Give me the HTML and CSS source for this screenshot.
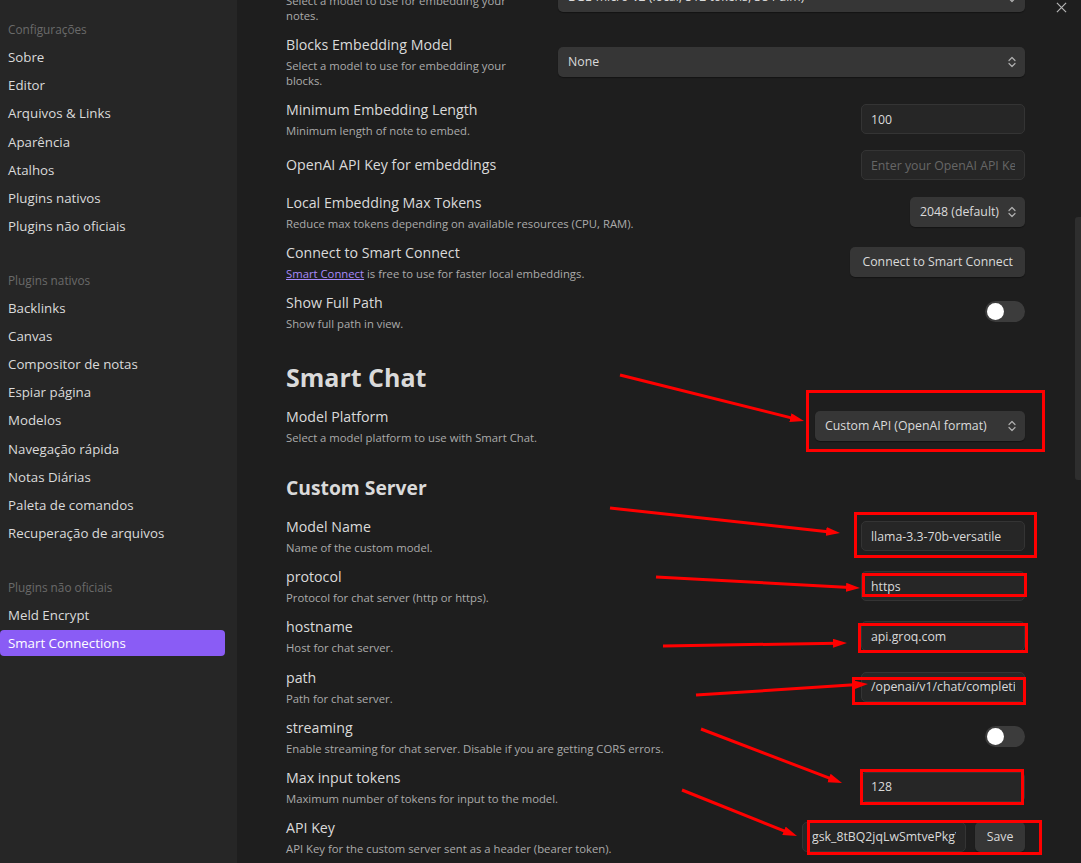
FILE: index.html
```html
<!DOCTYPE html>
<html lang="pt">
<head>
<meta charset="utf-8">
<title>Configurações</title>
<link rel="stylesheet" href="styles.css">
</head>
<body>
<div class="app">
  <nav class="sidebar">
    <div class="nav-group">
      <div class="nav-header">Configurações</div>
      <div class="nav-item">Sobre</div>
      <div class="nav-item">Editor</div>
      <div class="nav-item">Arquivos &amp; Links</div>
      <div class="nav-item">Aparência</div>
      <div class="nav-item">Atalhos</div>
      <div class="nav-item">Plugins nativos</div>
      <div class="nav-item">Plugins não oficiais</div>
    </div>
    <div class="nav-group">
      <div class="nav-header">Plugins nativos</div>
      <div class="nav-item">Backlinks</div>
      <div class="nav-item">Canvas</div>
      <div class="nav-item">Compositor de notas</div>
      <div class="nav-item">Espiar página</div>
      <div class="nav-item">Modelos</div>
      <div class="nav-item">Navegação rápida</div>
      <div class="nav-item">Notas Diárias</div>
      <div class="nav-item">Paleta de comandos</div>
      <div class="nav-item">Recuperação de arquivos</div>
    </div>
    <div class="nav-group">
      <div class="nav-header">Plugins não oficiais</div>
      <div class="nav-item">Meld Encrypt</div>
      <div class="nav-item active">Smart Connections</div>
    </div>
  </nav>

  <main class="content">
    <div class="settings">
      <div class="setting">
        <div class="info">
          <div class="name">Notes Embedding Model</div>
          <div class="desc">Select a model to use for embedding your notes.</div>
        </div>
        <div class="dropdown wide"><span>BGE-micro-v2 (local, 512 tokens, 384 dim)</span><svg class="chev" viewBox="0 0 8 12"><path d="M1 4.5 L4 1.5 L7 4.5 M1 7.5 L4 10.5 L7 7.5"/></svg></div>
      </div>

      <div class="setting">
        <div class="info">
          <div class="name">Blocks Embedding Model</div>
          <div class="desc">Select a model to use for embedding your blocks.</div>
        </div>
        <div class="dropdown wide"><span>None</span><svg class="chev" viewBox="0 0 8 12"><path d="M1 4.5 L4 1.5 L7 4.5 M1 7.5 L4 10.5 L7 7.5"/></svg></div>
      </div>

      <div class="setting">
        <div class="info">
          <div class="name">Minimum Embedding Length</div>
          <div class="desc">Minimum length of note to embed.</div>
        </div>
        <input class="text-input" type="text" value="100">
      </div>

      <div class="setting">
        <div class="info">
          <div class="name">OpenAI API Key for embeddings</div>
        </div>
        <input class="text-input" type="text" placeholder="Enter your OpenAI API Key">
      </div>

      <div class="setting">
        <div class="info">
          <div class="name">Local Embedding Max Tokens</div>
          <div class="desc">Reduce max tokens depending on available resources (CPU, RAM).</div>
        </div>
        <div class="dropdown tokens"><span>2048 (default)</span><svg class="chev" viewBox="0 0 8 12"><path d="M1 4.5 L4 1.5 L7 4.5 M1 7.5 L4 10.5 L7 7.5"/></svg></div>
      </div>

      <div class="setting">
        <div class="info">
          <div class="name">Connect to Smart Connect</div>
          <div class="desc"><a class="link" href="#">Smart Connect</a> is free to use for faster local embeddings.</div>
        </div>
        <button class="btn">Connect to Smart Connect</button>
      </div>

      <div class="setting">
        <div class="info">
          <div class="name">Show Full Path</div>
          <div class="desc">Show full path in view.</div>
        </div>
        <div class="toggle"><div class="knob"></div></div>
      </div>

      <h2 class="heading h-big">Smart Chat</h2>

      <div class="setting">
        <div class="info">
          <div class="name">Model Platform</div>
          <div class="desc">Select a model platform to use with Smart Chat.</div>
        </div>
        <div class="dropdown platform"><span>Custom API (OpenAI format)</span><svg class="chev" viewBox="0 0 8 12"><path d="M1 4.5 L4 1.5 L7 4.5 M1 7.5 L4 10.5 L7 7.5"/></svg></div>
      </div>

      <h3 class="heading h-small">Custom Server</h3>

      <div class="setting">
        <div class="info">
          <div class="name">Model Name</div>
          <div class="desc">Name of the custom model.</div>
        </div>
        <input class="text-input" type="text" value="llama-3.3-70b-versatile">
      </div>

      <div class="setting">
        <div class="info">
          <div class="name">protocol</div>
          <div class="desc">Protocol for chat server (http or https).</div>
        </div>
        <input class="text-input" type="text" value="https">
      </div>

      <div class="setting">
        <div class="info">
          <div class="name">hostname</div>
          <div class="desc">Host for chat server.</div>
        </div>
        <input class="text-input" type="text" value="api.groq.com">
      </div>

      <div class="setting">
        <div class="info">
          <div class="name">path</div>
          <div class="desc">Path for chat server.</div>
        </div>
        <input class="text-input" type="text" value="/openai/v1/chat/completions">
      </div>

      <div class="setting">
        <div class="info">
          <div class="name">streaming</div>
          <div class="desc">Enable streaming for chat server. Disable if you are getting CORS errors.</div>
        </div>
        <div class="toggle"><div class="knob"></div></div>
      </div>

      <div class="setting">
        <div class="info">
          <div class="name">Max input tokens</div>
          <div class="desc">Maximum number of tokens for input to the model.</div>
        </div>
        <input class="text-input" type="text" value="128">
      </div>

      <div class="setting">
        <div class="info">
          <div class="name">API Key</div>
          <div class="desc">API Key for the custom server sent as a header (bearer token).</div>
        </div>
        <div class="combo">
          <input class="text-input" type="text" value="gsk_8tBQ2jqLwSmtvePkgYxr3F">
          <button class="btn save">Save</button>
        </div>
      </div>
    </div>

    <svg class="close" viewBox="0 0 12 12"><path d="M1 1 L11 11 M11 1 L1 11"/></svg>
    <div class="scroll-thumb"></div>
  </main>
</div>

<svg class="annotations" width="1081" height="863" viewBox="0 0 1081 863">
  <defs>
    <marker id="ah" markerUnits="userSpaceOnUse" markerWidth="14" markerHeight="10" refX="4" refY="4.5" orient="auto">
      <path d="M0,0 L14,4.5 L0,9 z" fill="#ff0000"/>
    </marker>
  </defs>
  <g fill="none" stroke="#ff0000" stroke-width="3">
    <rect x="807.5" y="391.5" width="236" height="59"/>
    <rect x="855.5" y="513.5" width="180" height="43"/>
    <rect x="863.5" y="574.5" width="162" height="21"/>
    <rect x="859.5" y="624.5" width="167" height="27"/>
    <rect x="853.5" y="678.5" width="171" height="25"/>
    <rect x="861.5" y="770.5" width="161" height="33"/>
    <rect x="808.5" y="821.5" width="232" height="32"/>
    <line x1="620" y1="375" x2="794.3" y2="418.6" marker-end="url(#ah)"/>
    <line x1="610" y1="508" x2="830.1" y2="531.9" marker-end="url(#ah)"/>
    <line x1="656" y1="577" x2="850" y2="587.5" marker-end="url(#ah)"/>
    <line x1="663" y1="646" x2="837" y2="643.2" marker-end="url(#ah)"/>
    <line x1="696" y1="695" x2="858" y2="684.6" marker-end="url(#ah)"/>
    <line x1="701" y1="729" x2="832.7" y2="779.4" marker-end="url(#ah)"/>
    <line x1="682" y1="790" x2="787.7" y2="832.3" marker-end="url(#ah)"/>
  </g>
</svg>
</body>
</html>
```

FILE: styles.css
```css
* { box-sizing: border-box; }

html, body {
  margin: 0;
  padding: 0;
  width: 1081px;
  height: 863px;
  overflow: hidden;
  background: #1e1e1e;
  font-family: "Open Sans", "Noto Sans", sans-serif;
  color: #dadada;
}

.app {
  display: flex;
  height: 863px;
  position: relative;
}

/* Sidebar */
.sidebar {
  width: 237px;
  flex: none;
  background: #262626;
  padding-top: 15px;
  display: flex;
  flex-direction: column;
  gap: 26.5px;
}

.nav-group {
  display: flex;
  flex-direction: column;
  gap: 2.17px;
}

.nav-header {
  height: 28px;
  line-height: 28px;
  padding-left: 8px;
  font-size: 11.8px;
  color: #6a6a6a;
  margin-bottom: -1px;
}

.nav-item {
  height: 26px;
  line-height: 26px;
  padding-left: 8px;
  margin-right: 12px;
  font-size: 13.3px;
  color: #dadada;
  border-radius: 4px;
  white-space: nowrap;
}

.nav-item.active {
  background: #8a5cf5;
  color: #ffffff;
}

/* Content */
.content {
  flex: 1;
  position: relative;
  overflow: hidden;
}

.settings {
  margin-top: -36px;
  padding: 0 56px 0 49px;
}

.setting {
  display: flex;
  align-items: center;
  gap: 22px;
  padding: 6px 0 6.15px;
}

.info {
  flex: 1 1 auto;
  min-width: 0;
}

.name {
  font-size: 14.2px;
  line-height: 20px;
  color: #dadada;
}

.desc {
  font-size: 11.3px;
  line-height: 15px;
  padding-top: 3px;
  color: #ababab;
}

.link {
  color: #a88bfa;
  text-decoration: underline;
}

.heading {
  margin: 0;
  font-weight: 700;
  color: #dadada;
}

.h-big {
  font-size: 25px;
  line-height: 32px;
  margin-top: 24px;
  margin-bottom: 8px;
}

.h-small {
  font-size: 19.3px;
  line-height: 26px;
  margin-top: 24px;
  margin-bottom: 10px;
}

/* Controls */
.dropdown {
  flex: none;
  height: 30px;
  display: flex;
  align-items: center;
  justify-content: space-between;
  gap: 8px;
  padding: 0 9px 0 10px;
  background: #363636;
  border-radius: 5px;
  box-shadow: 0 1px 1px rgba(0, 0, 0, 0.35);
  font-size: 12.3px;
  color: #dadada;
  white-space: nowrap;
  overflow: hidden;
}

.dropdown.wide {
  width: 467px;
}

.dropdown.tokens {
  width: 115px;
}

.dropdown.platform {
  width: 210px;
}

.chev {
  width: 8px;
  height: 12px;
  flex: none;
}

.chev path {
  fill: none;
  stroke: #b0b0b0;
  stroke-width: 1.2;
  stroke-linecap: round;
  stroke-linejoin: round;
}

.text-input {
  flex: none;
  width: 164px;
  height: 30px;
  padding: 0 9px;
  background: #262626;
  border: 1px solid #343434;
  border-radius: 5px;
  font-family: "Open Sans", "Noto Sans", sans-serif;
  font-size: 12.3px;
  color: #dadada;
  outline: none;
}

.text-input::placeholder {
  color: #666666;
}

.btn {
  flex: none;
  height: 30px;
  padding: 0 12px;
  background: #363636;
  border: none;
  border-radius: 5px;
  box-shadow: 0 1px 1px rgba(0, 0, 0, 0.35);
  font-family: "Open Sans", "Noto Sans", sans-serif;
  font-size: 12.3px;
  color: #dadada;
}

.combo {
  flex: none;
  display: flex;
  align-items: center;
  gap: 9px;
}

.combo .text-input {
  width: 164px;
}

.btn.save {
  width: 50px;
  padding: 0;
}

.toggle {
  flex: none;
  width: 40px;
  height: 21px;
  border-radius: 11px;
  background: #3c3c3c;
  padding: 2px;
  display: flex;
  align-items: center;
}

.knob {
  width: 17px;
  height: 17px;
  border-radius: 50%;
  background: #ffffff;
}

.close {
  position: absolute;
  top: 2px;
  left: 819px;
  width: 11px;
  height: 11px;
}

.close path {
  fill: none;
  stroke: #b5b5b5;
  stroke-width: 1.3;
}

.scroll-thumb {
  position: absolute;
  right: 0;
  top: 217px;
  width: 6px;
  height: 263px;
  border-radius: 3px 0 0 3px;
  background: #2e2e2e;
}

.annotations {
  position: absolute;
  left: 0;
  top: 0;
  pointer-events: none;
}
```
